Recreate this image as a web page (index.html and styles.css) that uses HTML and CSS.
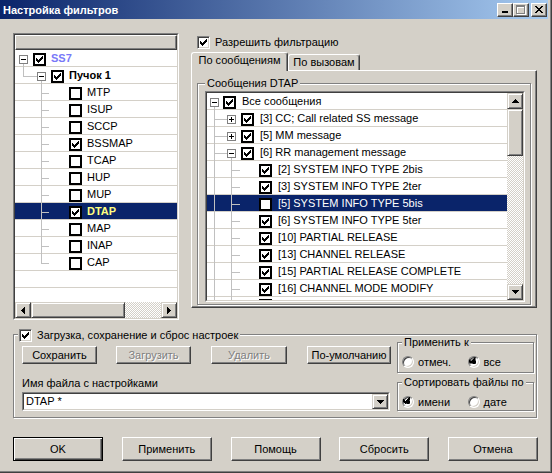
FILE: index.html
```html
<!DOCTYPE html>
<html lang="ru">
<head>
<meta charset="utf-8">
<title>Настройка фильтров</title>
<link rel="stylesheet" href="styles.css">
</head>
<body>
<div class="window">
  <div class="titlebar">
    <span class="title">Настройка фильтров</span>
    <div class="caption-btns">
      <span class="cbtn"><svg class="px" width="8" height="7" viewBox="0 0 8 7"><rect x="1" y="5" width="6" height="2"/></svg></span>
      <span class="cbtn"><svg class="px" width="10" height="10" viewBox="0 0 10 10"><g fill="none" stroke="#fff"><rect x="1.5" y="1.5" width="8" height="8"/><path d="M1 2.5h9"/></g><g fill="none" stroke="#808080"><rect x="0.5" y="0.5" width="8" height="8"/><path d="M0 1.5h9"/></g></svg></span>
      <span class="cbtn close"><svg class="px" width="8" height="7" viewBox="0 0 8 7"><path d="M0 0h2v1h1v1h2v-1h1v-1h2v1h-1v1h-1v1h-1v1h1v1h1v1h1v1h-2v-1h-1v-1h-2v1h-1v1h-2v-1h1v-1h1v-1h1v-1h-1v-1h-1v-1h-1z"/></svg></span>
    </div>
  </div>

  <div class="content">
    <div class="main">
      <div class="tree-left sunken"><div class="sunken-in tl-in">
        <div class="thead"></div>
        <div class="rows lrows">
          <div class="trow"><svg class="g" width="18" height="17"><path class="ln" d="M8.5 14V17"/><rect class="exp" x="4.5" y="5.5" width="8" height="8"/><path class="sign" d="M6 9.5h5"/></svg><span class="tcb on"></span><span class="tl ss7">SS7</span></div>
          <div class="trow"><svg class="g" width="36" height="17"><path class="ln" d="M8.5 0V9.5H22M26.5 14V17"/><rect class="exp" x="22.5" y="5.5" width="8" height="8"/><path class="sign" d="M24 9.5h5"/></svg><span class="tcb on"></span><span class="tl b">Пучок 1</span></div>
          <div class="trow"><svg class="g" width="54" height="17"><path class="ln" d="M26.5 0V17M26.5 9.5H34"/></svg><span class="tcb"></span><span class="tl">MTP</span></div>
          <div class="trow"><svg class="g" width="54" height="17"><path class="ln" d="M26.5 0V17M26.5 9.5H34"/></svg><span class="tcb"></span><span class="tl">ISUP</span></div>
          <div class="trow"><svg class="g" width="54" height="17"><path class="ln" d="M26.5 0V17M26.5 9.5H34"/></svg><span class="tcb"></span><span class="tl">SCCP</span></div>
          <div class="trow"><svg class="g" width="54" height="17"><path class="ln" d="M26.5 0V17M26.5 9.5H34"/></svg><span class="tcb on"></span><span class="tl">BSSMAP</span></div>
          <div class="trow"><svg class="g" width="54" height="17"><path class="ln" d="M26.5 0V17M26.5 9.5H34"/></svg><span class="tcb"></span><span class="tl">TCAP</span></div>
          <div class="trow"><svg class="g" width="54" height="17"><path class="ln" d="M26.5 0V17M26.5 9.5H34"/></svg><span class="tcb"></span><span class="tl">HUP</span></div>
          <div class="trow"><svg class="g" width="54" height="17"><path class="ln" d="M26.5 0V17M26.5 9.5H34"/></svg><span class="tcb"></span><span class="tl">MUP</span></div>
          <div class="trow sel"><svg class="g" width="54" height="17"><path class="ln" d="M26.5 0V17M26.5 9.5H34"/></svg><span class="tcb on"></span><span class="tl b dtap">DTAP</span></div>
          <div class="trow"><svg class="g" width="54" height="17"><path class="ln" d="M26.5 0V17M26.5 9.5H34"/></svg><span class="tcb"></span><span class="tl">MAP</span></div>
          <div class="trow"><svg class="g" width="54" height="17"><path class="ln" d="M26.5 0V17M26.5 9.5H34"/></svg><span class="tcb"></span><span class="tl">INAP</span></div>
          <div class="trow"><svg class="g" width="54" height="17"><path class="ln" d="M26.5 0V9.5H34"/></svg><span class="tcb"></span><span class="tl">CAP</span></div>
          <div class="trow"></div>
          <div class="trow"></div>
        </div>
        <div class="hscroll">
          <span class="sb"><svg class="px" width="4" height="7" viewBox="0 0 4 7"><path d="M0 3h1v-1h1v-1h1v-1h1v7h-1v-1h-1v-1h-1v-1h-1z"/></svg></span>
          <span class="sb thumb-h"></span>
          <span class="track"></span>
          <span class="sb"><svg class="px" width="4" height="7" viewBox="0 0 4 7"><path d="M0 0h1v1h1v1h1v1h1v1h-1v1h-1v1h-1v1h-1z"/></svg></span>
        </div>
      </div></div>

      <div class="right">
        <div class="chkline"><span class="cb3d on"></span><span class="ctext">Разрешить фильтрацию</span></div>
        <div class="tabs">
          <div class="tab active">По сообщениям</div>
          <div class="tab inactive">По вызовам</div>
        </div>
        <div class="tabpanel">
          <div class="group g-dtap">
            <span class="legend lg-dtap">Сообщения DTAP</span>
            <div class="list sunken"><div class="sunken-in list-in">
              <div class="rows rrows">
                <div class="trow rr"><svg class="g" width="16" height="17"><path class="ln" d="M7.5 14V17"/><rect class="exp" x="3.5" y="5.5" width="8" height="8"/><path class="sign" d="M5 9.5h5"/></svg><span class="tcb on"></span><span class="tl">Все сообщения</span></div>
                <div class="trow rr"><svg class="g" width="34" height="17"><path class="ln" d="M7.5 0V17M7.5 9.5H20"/><rect class="exp" x="20.5" y="5.5" width="8" height="8"/><path class="sign" d="M22 9.5h5M24.5 7v5"/></svg><span class="tcb on"></span><span class="tl">[3] CC; Call related SS message</span></div>
                <div class="trow rr"><svg class="g" width="34" height="17"><path class="ln" d="M7.5 0V17M7.5 9.5H20"/><rect class="exp" x="20.5" y="5.5" width="8" height="8"/><path class="sign" d="M22 9.5h5M24.5 7v5"/></svg><span class="tcb on"></span><span class="tl">[5] MM message</span></div>
                <div class="trow rr"><svg class="g" width="34" height="17"><path class="ln" d="M7.5 0V17M7.5 9.5H20M24.5 14V17"/><rect class="exp" x="20.5" y="5.5" width="8" height="8"/><path class="sign" d="M22 9.5h5"/></svg><span class="tcb on"></span><span class="tl">[6] RR management message</span></div>
                <div class="trow rr"><svg class="g" width="52" height="17"><path class="ln" d="M7.5 0V17M24.5 0V17M24.5 9.5H33"/></svg><span class="tcb on"></span><span class="tl">[2] SYSTEM INFO TYPE 2bis</span></div>
                <div class="trow rr"><svg class="g" width="52" height="17"><path class="ln" d="M7.5 0V17M24.5 0V17M24.5 9.5H33"/></svg><span class="tcb on"></span><span class="tl">[3] SYSTEM INFO TYPE 2ter</span></div>
                <div class="trow rr sel"><svg class="g" width="52" height="17"><path class="ln" d="M7.5 0V17M24.5 0V17M24.5 9.5H33"/></svg><span class="tcb"></span><span class="tl">[5] SYSTEM INFO TYPE 5bis</span></div>
                <div class="trow rr"><svg class="g" width="52" height="17"><path class="ln" d="M7.5 0V17M24.5 0V17M24.5 9.5H33"/></svg><span class="tcb on"></span><span class="tl">[6] SYSTEM INFO TYPE 5ter</span></div>
                <div class="trow rr"><svg class="g" width="52" height="17"><path class="ln" d="M7.5 0V17M24.5 0V17M24.5 9.5H33"/></svg><span class="tcb on"></span><span class="tl">[10] PARTIAL RELEASE</span></div>
                <div class="trow rr"><svg class="g" width="52" height="17"><path class="ln" d="M7.5 0V17M24.5 0V17M24.5 9.5H33"/></svg><span class="tcb on"></span><span class="tl">[13] CHANNEL RELEASE</span></div>
                <div class="trow rr"><svg class="g" width="52" height="17"><path class="ln" d="M7.5 0V17M24.5 0V17M24.5 9.5H33"/></svg><span class="tcb on"></span><span class="tl">[15] PARTIAL RELEASE COMPLETE</span></div>
                <div class="trow rr"><svg class="g" width="52" height="17"><path class="ln" d="M7.5 0V17M24.5 0V17M24.5 9.5H33"/></svg><span class="tcb on"></span><span class="tl">[16] CHANNEL MODE MODIFY</span></div>
                <div class="trow rr peek"><svg class="g" width="52" height="17"><path class="ln" d="M7.5 0V17M24.5 0V17M24.5 9.5H33"/></svg><span class="tcb on"></span></div>
              </div>
              <div class="vscroll">
                <span class="sb"><svg class="px" width="7" height="4" viewBox="0 0 7 4"><path d="M3 0h1v1h1v1h1v1h1v1h-7v-1h1v-1h1v-1h1z"/></svg></span>
                <span class="sb thumb-v"></span>
                <span class="track"></span>
                <span class="sb"><svg class="px" width="7" height="4" viewBox="0 0 7 4"><path d="M0 0h7v1h-1v1h-1v1h-1v1h-1v-1h-1v-1h-1v-1h-1z"/></svg></span>
              </div>
            </div></div>
          </div>
        </div>
      </div>
    </div>

    <div class="group g-settings">
      <div class="legend lg-set"><span class="cb3d on"></span><span class="ctext">Загрузка, сохранение и сброс настроек</span></div>
      <div class="s-left">
        <div class="btnrow">
          <span class="btn b-save">Сохранить</span>
          <span class="btn dis b-load">Загрузить</span>
          <span class="btn dis b-del">Удалить</span>
          <span class="btn b-def">По-умолчанию</span>
        </div>
        <div class="flabel">Имя файла с настройками</div>
        <div class="combo"><div class="combo-in">
          <span class="combo-text">DTAP *</span>
          <span class="sb dd"><svg class="px" width="7" height="4" viewBox="0 0 7 4"><path d="M0 0h7v1h-1v1h-1v1h-1v1h-1v-1h-1v-1h-1v-1h-1z"/></svg></span>
        </div></div>
      </div>
      <div class="s-right">
        <div class="group sub sub1">
          <span class="legend lg-sub">Применить к</span>
          <div class="opts">
            <span class="opt"><span class="radio"></span>отмеч.</span>
            <span class="opt"><span class="radio on"></span>все</span>
          </div>
        </div>
        <div class="group sub sub2">
          <span class="legend lg-sub">Сортировать файлы по</span>
          <div class="opts">
            <span class="opt"><span class="radio on"></span>имени</span>
            <span class="opt"><span class="radio"></span>дате</span>
          </div>
        </div>
      </div>
    </div>

    <div class="dlg-btns">
      <span class="btn def">OK</span>
      <span class="btn">Применить</span>
      <span class="btn">Помощь</span>
      <span class="btn">Сбросить</span>
      <span class="btn">Отмена</span>
    </div>
  </div>
</div>
</body>
</html>
```

FILE: styles.css
```css
* { box-sizing: border-box; }
html, body { margin: 0; padding: 0; }
body {
  width: 552px;
  height: 473px;
  overflow: hidden;
  background: #d4d0c8;
  font-family: "Liberation Sans", Arial, sans-serif;
  font-size: 11px;
  color: #000;
}
.window {
  width: 552px;
  height: 473px;
  background: #d4d0c8;
  box-shadow: inset -1px -1px 0 #404040, inset -2px -2px 0 #808080;
}

/* title bar */
.titlebar {
  height: 19px;
  margin-right: 4px;
  display: flex;
  align-items: center;
  padding-left: 3px;
  background: linear-gradient(to right, #0a246a, #a6caf0);
}
.title {
  flex: 1;
  color: #fff;
  font-weight: bold;
  font-size: 11px;
  white-space: nowrap;
}
.caption-btns { display: flex; margin-right: 1px; }
.cbtn {
  width: 16px;
  height: 14px;
  display: flex;
  align-items: center;
  justify-content: center;
  background: #d4d0c8;
  border: 1px solid;
  border-color: #fff #404040 #404040 #fff;
  box-shadow: inset -1px -1px 0 #808080;
}
.cbtn.close { margin-left: 2px; }
.px { display: block; shape-rendering: crispEdges; }

/* content */
.content { padding-left: 13px; }
.main { display: flex; margin-top: 14px; height: 287px; }

.sunken {
  border: 1px solid;
  border-color: #808080 #fff #fff #808080;
}
.sunken-in {
  height: 100%;
  border: 1px solid;
  border-color: #404040 #d4d0c8 #d4d0c8 #404040;
}

/* left tree */
.tree-left { width: 166px; height: 287px; flex-shrink: 0; }
.tl-in { display: flex; flex-direction: column; background: #fff; }
.thead {
  height: 15px;
  flex-shrink: 0;
  background: #d4d0c8;
  border: 1px solid;
  border-color: #fff #404040 #404040 #fff;
  box-shadow: inset -1px -1px 0 #808080;
}
.rows { overflow: hidden; background: #fff; }
.lrows { height: 252px; flex-shrink: 0; }

.trow {
  height: 17px;
  display: flex;
  align-items: flex-start;
  white-space: nowrap;
  background: #fff linear-gradient(#d4d0c8, #d4d0c8) left bottom / 100% 1px no-repeat;
}
.trow.sel {
  background: #0a246a linear-gradient(#d4d0c8, #d4d0c8) left bottom / 100% 1px no-repeat;
  color: #fff;
}
.g { display: block; flex-shrink: 0; shape-rendering: crispEdges; }
.g .ln { stroke: #c0c0c0; fill: none; }
.g .exp { fill: #fff; stroke: #808080; }
.g .sign { stroke: #000; fill: none; }

.tcb {
  width: 13px;
  height: 13px;
  margin-top: 3px;
  flex-shrink: 0;
  border: 2px solid #000;
  background: #fff;
  display: flex;
  align-items: center;
  justify-content: center;
}
.peek .tcb { margin-top: 2px; }
.on::after {
  content: "";
  display: block;
  width: 7px;
  height: 7px;
  background: #000;
  clip-path: polygon(6px 0, 7px 0, 7px 3px, 6px 3px, 6px 4px, 5px 4px, 5px 5px, 4px 5px, 4px 6px, 3px 6px, 3px 7px, 2px 7px, 2px 6px, 1px 6px, 1px 5px, 0 5px, 0 2px, 1px 2px, 1px 3px, 2px 3px, 2px 4px, 3px 4px, 3px 3px, 4px 3px, 4px 2px, 5px 2px, 5px 1px, 6px 1px);
}
.tl { line-height: 17px; margin-left: 5px; }
.rr .tl { margin-left: 6px; }
.b { font-weight: bold; }
.ss7 { color: #7878f8; font-weight: bold; }
.dtap { color: #ffff80; }

/* scrollbars */
.hscroll { display: flex; height: 16px; flex-shrink: 0; }
.vscroll { display: flex; flex-direction: column; width: 16px; flex-shrink: 0; }
.sb {
  width: 16px;
  height: 16px;
  flex-shrink: 0;
  display: flex;
  align-items: center;
  justify-content: center;
  background: #d4d0c8;
  border: 1px solid;
  border-color: #d4d0c8 #404040 #404040 #d4d0c8;
  box-shadow: inset 1px 1px 0 #fff, inset -1px -1px 0 #808080;
}
.thumb-h { width: 94px; }
.thumb-v { height: 47px; }
.track {
  flex: 1;
  background: repeating-conic-gradient(#fff 0 25%, #d4d0c8 0 50%) 0 0 / 2px 2px;
}

/* right column */
.right {
  width: 346px;
  margin-left: 12px;
  display: flex;
  flex-direction: column;
}
.chkline {
  display: flex;
  align-items: center;
  height: 13px;
  margin-top: 3px;
  padding-left: 6px;
}
.cb3d {
  width: 13px;
  height: 13px;
  flex-shrink: 0;
  border: 1px solid;
  border-color: #808080 #fff #fff #808080;
  background: #fff;
  box-shadow: inset 1px 1px 0 #404040, inset -1px -1px 0 #d4d0c8;
  display: flex;
  align-items: center;
  justify-content: center;
}
.ctext { margin-left: 5px; line-height: 13px; white-space: nowrap; }

.tabs { display: flex; align-items: flex-end; height: 18px; margin-top: 3px; }
.tab {
  background: #d4d0c8;
  border: 1px solid #fff;
  border-right-color: #404040;
  border-bottom: 0;
  border-radius: 3px 3px 0 0;
  box-shadow: inset -1px 0 0 #808080;
  text-align: center;
  white-space: nowrap;
}
.tab.active {
  width: 97px;
  height: 19px;
  margin-bottom: -1px;
  line-height: 14px;
  position: relative;
  z-index: 1;
}
.tab.inactive {
  width: 72px;
  height: 16px;
  line-height: 15px;
}
.tabpanel {
  height: 238px;
  border: 1px solid;
  border-color: #fff #404040 #404040 #fff;
  box-shadow: inset -1px -1px 0 #808080;
  padding: 12px 5px 2px 5px;
}

/* group boxes */
.group {
  position: relative;
  border: 1px solid #808080;
  box-shadow: 1px 1px 0 #fff, inset 1px 1px 0 #fff;
}
.legend {
  position: absolute;
  background: #d4d0c8;
  line-height: 13px;
  white-space: nowrap;
}
.lg-dtap { left: 7px; top: -7px; padding: 0 2px; }
.lg-set { left: 4px; top: -6px; padding: 0 2px 0 1px; display: flex; align-items: center; }
.lg-sub { left: 4px; top: -7px; padding: 0 2px; }

.g-dtap { height: 100%; padding: 7px 5px 2px 7px; }
.list { width: 320px; height: 211px; }
.list-in { display: flex; background: #fff; }
.rrows { width: 300px; height: 207px; flex-shrink: 0; }

/* settings group */
.g-settings {
  width: 524px;
  height: 84px;
  margin-top: 14px;
  padding: 7px 2px 0 8px;
  display: flex;
}
.s-left { width: 368px; padding-top: 4px; flex-shrink: 0; }
.btnrow { display: flex; height: 18px; }
.btn {
  display: flex;
  align-items: center;
  justify-content: center;
  background: #d4d0c8;
  border: 1px solid;
  border-color: #fff #404040 #404040 #fff;
  box-shadow: inset -1px -1px 0 #808080, inset 1px 1px 0 #d4d0c8;
  white-space: nowrap;
  flex-shrink: 0;
}
.btn.dis { color: #808080; text-shadow: 1px 1px 0 #fff; }
.btn.def {
  border-color: #000;
  box-shadow: inset 1px 1px 0 #fff, inset -1px -1px 0 #404040, inset -2px -2px 0 #808080;
}
.b-save { width: 75px; }
.b-load { width: 75px; margin-left: 19px; }
.b-del { width: 76px; margin-left: 20px; }
.b-def { width: 84px; margin-left: 20px; }

.flabel { margin-top: 12px; line-height: 14px; white-space: nowrap; }
.combo {
  width: 368px;
  height: 19px;
  margin-top: 2px;
  border: 1px solid;
  border-color: #808080 #fff #fff #808080;
}
.combo-in {
  height: 100%;
  display: flex;
  background: #fff;
  border: 1px solid;
  border-color: #404040 #d4d0c8 #d4d0c8 #404040;
}
.combo-text { flex: 1; padding-left: 2px; line-height: 15px; }
.sb.dd { height: 15px; }

.s-right { width: 137px; margin-left: 7px; flex-shrink: 0; }
.sub { padding: 12px 0 0 4px; }
.sub1 { height: 31px; }
.sub2 { height: 29px; margin-top: 9px; }
.opts { display: flex; height: 14px; }
.opt { display: flex; align-items: center; width: 77px; white-space: nowrap; }
.radio {
  width: 12px;
  height: 12px;
  margin-right: 4px;
  flex-shrink: 0;
  border-radius: 50%;
  border: 1px solid;
  border-color: #808080 #fff #fff #808080;
  box-shadow: inset 1px 1px 0 #404040, inset -1px -1px 0 #d4d0c8;
  background: #fff;
}
.radio.on { background: radial-gradient(circle at 50% 50%, #000 0 2px, #fff 2.4px); }

/* dialog buttons */
.dlg-btns {
  display: flex;
  justify-content: space-between;
  width: 525px;
  margin-top: 19px;
}
.dlg-btns .btn { width: 90px; height: 24px; }
```
